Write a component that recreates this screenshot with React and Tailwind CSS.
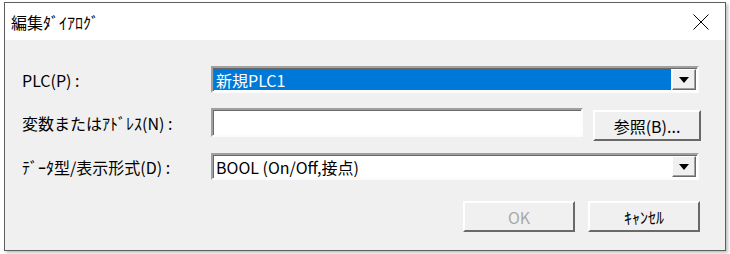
import React from 'react';

const font = { fontFamily: '"Noto Sans CJK JP", "Noto Sans", sans-serif' };

function Arrow() {
  return (
    <svg width="10" height="6" viewBox="0 0 10 6">
      <path d="M0 0 H10 L5 6 Z" fill="#000" />
    </svg>
  );
}

function DropButton() {
  return (
    <div className="w-[24px] h-full flex items-center justify-center bg-[#f0f0f0] border border-t-white border-l-white border-r-[#696969] border-b-[#696969] shadow-[inset_-1px_-1px_0_#a0a0a0]">
      <Arrow />
    </div>
  );
}

function Combo({ children, selected }) {
  return (
    <div className="w-[488px] h-[27px] flex border-2 border-t-[#a0a0a0] border-l-[#a0a0a0] border-r-[#fcfcfc] border-b-[#fcfcfc] shadow-[inset_1px_1px_0_#696969] bg-white p-[1px]">
      <div className={`flex-1 flex items-center pl-[2px] text-[16px] leading-none mr-[1px] ${selected ? 'bg-[#0078d7] text-white' : 'text-black'}`}>
        {children}
      </div>
      <DropButton />
    </div>
  );
}

function Button({ children, width, disabled }) {
  return (
    <div className={`${width} h-[31px] flex items-center justify-center bg-[#f0f0f0] border-2 border-t-white border-l-white border-r-[#696969] border-b-[#696969] text-[16px] leading-none ${disabled ? 'text-[#a8a8a8]' : 'text-black'}`}>
      {children}
    </div>
  );
}

export default function App() {
  return (
    <div className="w-[730px] h-[254px] bg-white pl-[4px] pt-[2px]" style={font}>
      <div className="w-[722px] h-[249px] flex flex-col border border-[#5e5e5e] shadow-[2px_2px_3px_rgba(0,0,0,0.25)]">
        <div className="h-[37px] bg-white flex items-center justify-between pl-[6px] pr-[16px]">
          <span className="text-[16px] text-black leading-none">編集ﾀﾞｲｱﾛｸﾞ</span>
          <svg width="16" height="16" viewBox="0 0 16 16">
            <path d="M0.5 0.5 L15.5 15.5 M15.5 0.5 L0.5 15.5" stroke="#000" strokeWidth="1" />
          </svg>
        </div>
        <div className="flex-1 bg-[#f0f0f0] pl-[17px] pt-[26px] text-[16px] text-black">
          <div className="flex items-center h-[27px]">
            <div className="w-[189px] leading-none">PLC(P) :</div>
            <Combo selected>新規PLC1</Combo>
          </div>
          <div className="flex items-start h-[32px] mt-[15px]">
            <div className="w-[189px] h-[29px] flex items-center leading-none">変数またはｱﾄﾞﾚｽ(N) :</div>
            <div className="w-[372px] h-[29px] bg-white border-2 border-t-[#a0a0a0] border-l-[#a0a0a0] border-r-[#fcfcfc] border-b-[#fcfcfc] shadow-[inset_1px_1px_0_#696969]" />
            <div className="ml-[10px] mt-[2px]">
              <Button width="w-[108px]">参照(B)...</Button>
            </div>
          </div>
          <div className="flex items-center h-[27px] mt-[13px]">
            <div className="w-[189px] leading-none">ﾃﾞｰﾀ型/表示形式(D) :</div>
            <Combo>BOOL (On/Off,接点)</Combo>
          </div>
          <div className="flex justify-end gap-[13px] mt-[21px] pr-[25px]">
            <Button width="w-[112px]" disabled>OK</Button>
            <Button width="w-[112px]">ｷｬﾝｾﾙ</Button>
          </div>
        </div>
      </div>
    </div>
  );
}
